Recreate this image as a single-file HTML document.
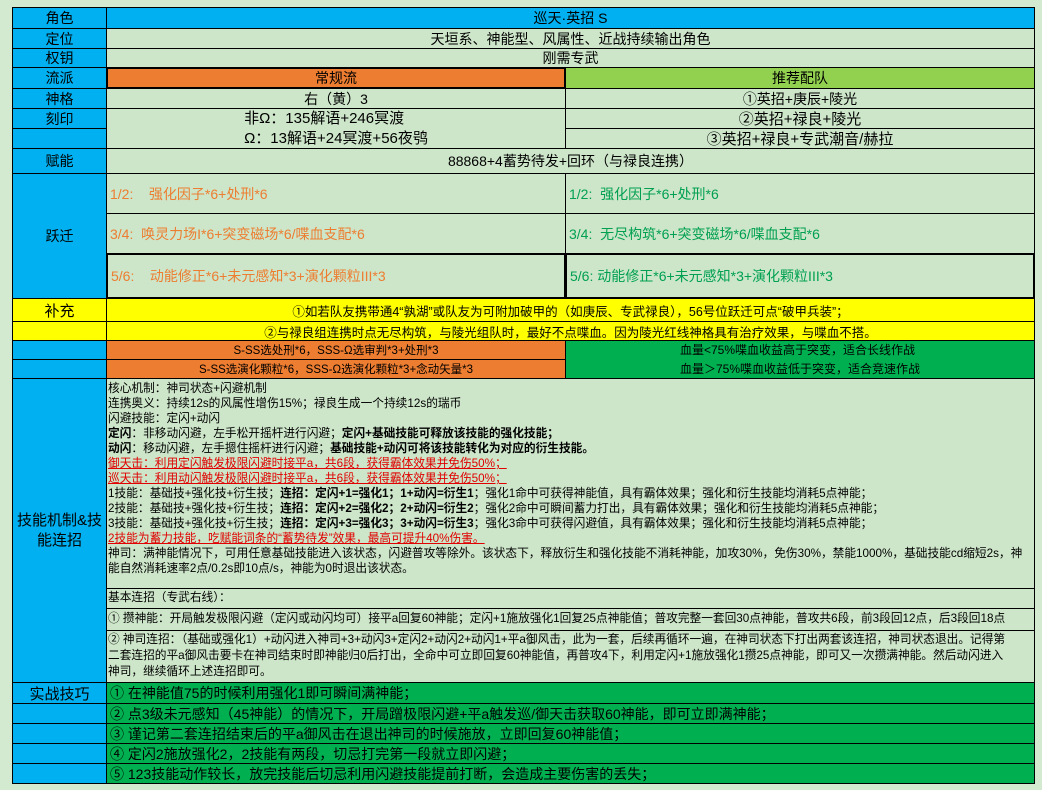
<!DOCTYPE html><html><head><meta charset="utf-8"><style>
*{margin:0;padding:0;box-sizing:border-box}
body{width:1042px;height:790px;background:#d4ead0;position:relative;overflow:hidden;font-family:"Liberation Sans","Noto Sans CJK SC","WenQuanYi Zen Hei",sans-serif;color:#000}
.c{position:absolute;border:1px solid #000;display:flex;align-items:center;justify-content:center;font-size:14px;white-space:nowrap;overflow:hidden}
.b{background:#00b0f0}.g{background:#cde6c9}.o{background:#ed7d31}.lg{background:#92d050}.dg{background:#00b050}.y{background:#ffff00}
.l{justify-content:flex-start;padding-left:3px}
.s{font-size:14px}
.t{position:absolute;font-size:11.7px;line-height:15px;white-space:nowrap}
.r{color:#e00000;text-decoration:underline}
</style></head><body>
<div class="c b" style="left:12px;top:7px;width:95px;height:22px">角色</div>
<div class="c b" style="left:106px;top:7px;width:929px;height:22px">巡天·英招 S</div>
<div class="c b" style="left:12px;top:28px;width:95px;height:21px">定位</div>
<div class="c g" style="left:106px;top:28px;width:929px;height:21px">天垣系、神能型、风属性、近战持续输出角色</div>
<div class="c b" style="left:12px;top:48px;width:95px;height:20px">权钥</div>
<div class="c g" style="left:106px;top:48px;width:929px;height:20px">刚需专武</div>
<div class="c b" style="left:12px;top:67px;width:95px;height:22px">流派</div>
<div class="c o" style="left:106px;top:67px;width:460px;height:22px;border-width:2px">常规流</div>
<div class="c lg" style="left:565px;top:67px;width:470px;height:22px">推荐配队</div>
<div class="c b" style="left:12px;top:88px;width:95px;height:21px">神格</div>
<div class="c g" style="left:106px;top:88px;width:460px;height:21px">右（黄）3</div>
<div class="c g" style="left:565px;top:88px;width:470px;height:21px">①英招+庚辰+陵光</div>
<div class="c b" style="left:12px;top:108px;width:95px;height:21px">刻印</div>
<div class="c b" style="left:12px;top:128px;width:95px;height:21px"></div>
<div class="c g" style="left:106px;top:108px;width:460px;height:41px;flex-direction:column;font-size:15px;line-height:20px">非Ω：135解语+246冥渡<br>Ω：13解语+24冥渡+56夜鸮</div>
<div class="c g" style="left:565px;top:108px;width:470px;height:21px;font-size:15px">②英招+禄良+陵光</div>
<div class="c g" style="left:565px;top:128px;width:470px;height:21px;font-size:15px">③英招+禄良+专武潮音/赫拉</div>
<div class="c b" style="left:12px;top:148px;width:95px;height:26px">赋能</div>
<div class="c g" style="left:106px;top:148px;width:929px;height:26px;font-size:14px">88868+4蓄势待发+回环（与禄良连携）</div>
<div class="c b" style="left:12px;top:173px;width:95px;height:126px">跃迁</div>
<div class="c g l s" style="left:106px;top:173px;width:460px;height:41px;color:#ed7d31">1/2:&nbsp;&nbsp;&nbsp;&nbsp;强化因子*6+处刑*6</div>
<div class="c g l s" style="left:565px;top:173px;width:470px;height:41px;color:#00a050">1/2:&nbsp;&nbsp;强化因子*6+处刑*6</div>
<div class="c g l s" style="left:106px;top:213px;width:460px;height:41px;color:#ed7d31">3/4:&nbsp;&nbsp;唤灵力场I*6+突变磁场*6/喋血支配*6</div>
<div class="c g l s" style="left:565px;top:213px;width:470px;height:41px;color:#00a050">3/4:&nbsp;&nbsp;无尽构筑*6+突变磁场*6/喋血支配*6</div>
<div class="c g l s" style="left:106px;top:253px;width:460px;height:46px;color:#ed7d31;border-width:2px">5/6:&nbsp;&nbsp;&nbsp;&nbsp;动能修正*6+未元感知*3+演化颗粒III*3</div>
<div class="c g l s" style="left:565px;top:253px;width:470px;height:46px;color:#00a050;border-width:2px">5/6:&nbsp;动能修正*6+未元感知*3+演化颗粒III*3</div>
<div class="c y" style="left:12px;top:298px;width:95px;height:24px;font-size:15px">补充</div>
<div class="c y" style="left:12px;top:321px;width:95px;height:20px"></div>
<div class="c y" style="left:106px;top:298px;width:929px;height:24px;font-size:12.5px">①如若队友携带通4“孰湖”或队友为可附加破甲的（如庚辰、专武禄良），56号位跃迁可点“破甲兵装”；</div>
<div class="c y" style="left:106px;top:321px;width:929px;height:20px;font-size:12.5px">②与禄良组连携时点无尽构筑，与陵光组队时，最好不点喋血。因为陵光红线神格具有治疗效果，与喋血不搭。</div>
<div class="c b" style="left:12px;top:340px;width:95px;height:20px"></div>
<div class="c b" style="left:12px;top:359px;width:95px;height:20px"></div>
<div class="c o" style="left:106px;top:340px;width:460px;height:20px;font-size:11.5px">S-SS选处刑*6，SSS-Ω选审判*3+处刑*3</div>
<div class="c o" style="left:106px;top:359px;width:460px;height:20px;font-size:11.5px">S-SS选演化颗粒*6，SSS-Ω选演化颗粒*3+念动矢量*3</div>
<div class="c dg" style="left:565px;top:340px;width:470px;height:39px;flex-direction:column;font-size:12px;line-height:19px">血量&lt;75%喋血收益高于突变，适合长线作战<br>血量＞75%喋血收益低于突变，适合竞速作战</div>
<div class="c b" style="left:12px;top:378px;width:95px;height:305px;flex-direction:column;font-size:15px;line-height:20px;white-space:normal;text-align:center">技能机制&amp;技<br>能连招</div>
<div class="c g" style="left:106px;top:378px;width:929px;height:211px"></div>
<div class="t" style="left:108px;top:381px">核心机制：神司状态+闪避机制<br>连携奥义：持续12s的风属性增伤15%；禄良生成一个持续12s的瑞币<br>闪避技能：定闪+动闪<br><b>定闪</b>：非移动闪避，左手松开摇杆进行闪避；<b>定闪+基础技能可释放该技能的强化技能；</b><br><b>动闪</b>：移动闪避，左手摁住摇杆进行闪避；<b>基础技能+动闪可将该技能转化为对应的衍生技能。</b><br><span class="r">御天击：利用定闪触发极限闪避时接平a，共6段，获得霸体效果并免伤50%；</span><br><span class="r">巡天击：利用动闪触发极限闪避时接平a，共6段，获得霸体效果并免伤50%；</span><br>1技能：基础技+强化技+衍生技；<b>连招：定闪+1=强化1；1+动闪=衍生1</b>；强化1命中可获得神能值，具有霸体效果；强化和衍生技能均消耗5点神能；<br>2技能：基础技+强化技+衍生技；<b>连招：定闪+2=强化2；2+动闪=衍生2</b>；强化2命中可瞬间蓄力打出，具有霸体效果；强化和衍生技能均消耗5点神能；<br>3技能：基础技+强化技+衍生技；<b>连招：定闪+3=强化3；3+动闪=衍生3</b>；强化3命中可获得闪避值，具有霸体效果；强化和衍生技能均消耗5点神能；<br><span class="r">2技能为蓄力技能，吃赋能词条的“蓄势待发”效果，最高可提升40%伤害。</span><br>神司：满神能情况下，可用任意基础技能进入该状态，闪避普攻等除外。该状态下，释放衍生和强化技能不消耗神能，加攻30%，免伤30%，禁能1000%，基础技能cd缩短2s，神<br>能自然消耗速率2点/0.2s即10点/s，神能为0时退出该状态。</div>
<div class="c g" style="left:106px;top:588px;width:929px;height:21px"></div>
<div class="c g" style="left:106px;top:608px;width:929px;height:23px"></div>
<div class="c g" style="left:106px;top:630px;width:929px;height:53px"></div>
<div class="t" style="left:108px;top:590px">基本连招（专武右线）：</div>
<div class="t" style="left:108px;top:611px">①&nbsp;攒神能：开局触发极限闪避（定闪或动闪均可）接平a回复60神能；定闪+1施放强化1回复25点神能值；普攻完整一套回30点神能，普攻共6段，前3段回12点，后3段回18点</div>
<div class="t" style="left:108px;top:632px;line-height:16px">②&nbsp;神司连招：（基础或强化1）+动闪进入神司+3+动闪3+定闪2+动闪2+动闪1+平a御风击，此为一套，后续再循环一遍，在神司状态下打出两套该连招，神司状态退出。记得第<br>二套连招的平a御风击要卡在神司结束时即神能归0后打出，全命中可立即回复60神能值，再普攻4下，利用定闪+1施放强化1攒25点神能，即可又一次攒满神能。然后动闪进入<br>神司，继续循环上述连招即可。</div>
<div class="c b" style="left:12px;top:682px;width:95px;height:22px;font-size:15px">实战技巧</div>
<div class="c b" style="left:12px;top:703px;width:95px;height:21px"></div>
<div class="c b" style="left:12px;top:723px;width:95px;height:21px"></div>
<div class="c b" style="left:12px;top:743px;width:95px;height:21px"></div>
<div class="c b" style="left:12px;top:763px;width:95px;height:21px"></div>
<div class="c dg l" style="left:106px;top:682px;width:929px;height:22px;font-size:14px">①&nbsp;在神能值75的时候利用强化1即可瞬间满神能；</div>
<div class="c dg l" style="left:106px;top:703px;width:929px;height:21px;font-size:14px">②&nbsp;点3级未元感知（45神能）的情况下，开局蹭极限闪避+平a触发巡/御天击获取60神能，即可立即满神能；</div>
<div class="c dg l" style="left:106px;top:723px;width:929px;height:21px;font-size:14px">③&nbsp;谨记第二套连招结束后的平a御风击在退出神司的时候施放，立即回复60神能值；</div>
<div class="c dg l" style="left:106px;top:743px;width:929px;height:21px;font-size:14px">④&nbsp;定闪2施放强化2，2技能有两段，切忌打完第一段就立即闪避；</div>
<div class="c dg l" style="left:106px;top:763px;width:929px;height:21px;font-size:14px">⑤&nbsp;123技能动作较长，放完技能后切忌利用闪避技能提前打断，会造成主要伤害的丢失；</div>
</body></html>
